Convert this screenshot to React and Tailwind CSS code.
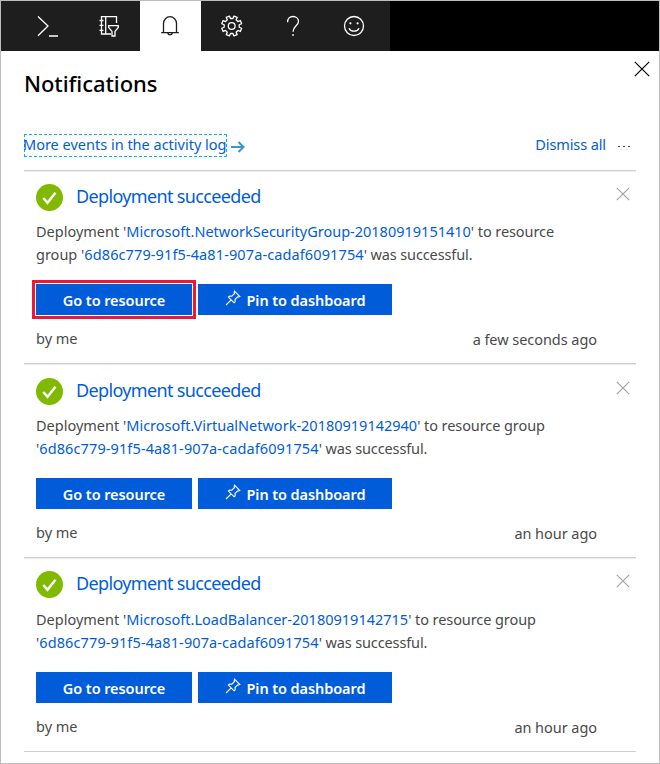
import React from "react";

const ITEMS = [
  {
    name: "Microsoft.NetworkSecurityGroup-20180919151410",
    tail: "' to resource",
    lead: "group '",
    time: "a few seconds ago",
    box: "h-[193px]",
    top: "pt-[12px]",
    textTop: "mt-[9px]",
    highlighted: true,
  },
  {
    name: "Microsoft.VirtualNetwork-20180919142940",
    tail: "' to resource group",
    lead: "'",
    time: "an hour ago",
    box: "h-[194px]",
    top: "pt-[13px]",
    textTop: "mt-[9px]",
  },
  {
    name: "Microsoft.LoadBalancer-20180919142715",
    tail: "' to resource group",
    lead: "'",
    time: "an hour ago",
    box: "h-[194px]",
    top: "pt-[12px]",
    textTop: "mt-[10px]",
  },
];

const GROUP = "6d86c779-91f5-4a81-907a-cadaf6091754";

function Icon({ children, size = 24, className = "" }) {
  return (
    <svg
      width={size}
      height={size}
      viewBox={`0 0 ${size} ${size}`}
      fill="none"
      stroke="currentColor"
      strokeWidth="1.3"
      className={`block shrink-0 ${className}`}
    >
      {children}
    </svg>
  );
}

function gearPath(cx, cy, outer, inner, teeth) {
  const step = (Math.PI * 2) / teeth;
  const at = (r, a) => `${(cx + r * Math.cos(a)).toFixed(2)} ${(cy + r * Math.sin(a)).toFixed(2)}`;
  let d = "";
  for (let i = 0; i < teeth; i++) {
    const a = (i + 0.5) * step - Math.PI / 2;
    d += `${i ? "L" : "M"}${at(inner, a - step * 0.29)}L${at(outer, a - step * 0.22)}L${at(outer, a + step * 0.22)}L${at(inner, a + step * 0.29)}`;
  }
  return d + "Z";
}

function TopBar() {
  return (
    <div className="flex h-[50px] bg-black text-white">
      <div className="flex h-full w-[389px] bg-[#1e1e1e]">
        <div className="flex w-[78px] items-center justify-end pr-[18px]">
          <Icon className="mr-[1px]">
            <path d="M2 2.5 12 12 2 21.8M13 22h9" />
          </Icon>
        </div>
        <div className="flex w-[61px] items-center justify-center">
          <Icon className="mr-[1px]">
            <path d="M19.500 9V2.700H4.500v17.300h9.500M8.700 2.700v17.300M2.500 6.500h4M2.500 11.400h4M2.500 16.300h4" />
            <path d="M11.700 11.700h9.600v1.700l-3.300 4v4.600h-3v-4.600l-3.300-4z" />
          </Icon>
        </div>
        <div className="flex w-[61px] items-center justify-center bg-white text-[#1e1e1e]">
          <Icon className="mr-[1px]">
            <path d="M5.500 18.700V9.500a6.500 6.800 0 0 1 13 0v9.200M3.200 18.700h17.600M9.800 19a2.300 2.300 0 0 0 4.500 0" />
          </Icon>
        </div>
        <div className="flex w-[61px] items-center justify-center">
          <Icon>
            <path d={gearPath(11.7, 12, 10.2, 7.6, 8)} strokeLinejoin="round" />
            <circle cx="11.700" cy="12" r="3.400" />
          </Icon>
        </div>
        <div className="flex w-[61px] items-center justify-center">
          <Icon>
            <path d="M6.600 8.200C6.600 4.300 8.800 2.500 12 2.500s5.500 2 5.500 5c0 4-5.500 4.800-5.500 10.200M12 20v2" />
          </Icon>
        </div>
        <div className="flex w-[61px] items-center justify-center">
          <Icon>
            <circle cx="12" cy="12" r="9.500" />
            <path d="M7 14.200c1.700 4 8.300 4 10 0" />
            <circle cx="8.400" cy="9.300" r="1.100" fill="currentColor" stroke="none" />
            <circle cx="15.600" cy="9.300" r="1.100" fill="currentColor" stroke="none" />
          </Icon>
        </div>
      </div>
    </div>
  );
}

function Notification({ item }) {
  return (
    <section className={`border-t border-[#cfcfcf] pl-3 shadow-[inset_0_1px_0_#ececec] ${item.box}`}>
      <div className={`flex items-start ${item.top}`}>
        <svg width="27" height="27" viewBox="0 0 27 27" className="mt-px block shrink-0">
          <circle cx="13.500" cy="13.500" r="13.500" fill="#7fba00" />
          <path d="m7.300 14 4.200 4.800 8-10" fill="none" stroke="#fff" strokeWidth="2.500" />
        </svg>
        <h2 className="ml-[13px] text-[18px] leading-[26px] tracking-[-0.65px] whitespace-nowrap text-[#015cda]">
          Deployment succeeded
        </h2>
        <Icon size={14} className="mt-[4px] mr-[6px] ml-auto text-[#a0a0a0]">
          <path d="m.8.8 12.400 12.400M13.200.8.8 13.200" strokeWidth="1.100" />
        </Icon>
      </div>
      <p className={`text-[14.5px] leading-[23px] whitespace-nowrap text-[#4a4a4a] ${item.textTop} -mb-px`}>
        Deployment '<span className="text-[#015cda]">{item.name}</span>
        <span className="tracking-[-0.08px]">{item.tail}</span>
        <br />
        {item.lead}
        <span className="tracking-[0.11px] text-[#015cda]">{GROUP}</span>
        <span className="tracking-[-0.12px]">' was successful.</span>
      </p>
      <div className="mt-[19px] flex gap-[6px] text-[14.5px] font-semibold tracking-[-0.08px] text-white">
        <button
          className={`h-[31px] w-[156px] bg-[#015cda] pt-[2px] ${
            item.highlighted ? "outline-3 outline-offset-1 outline-[#ee1739]" : ""
          }`}
        >
          Go to resource
        </button>
        <button className="flex h-[31px] w-[194px] items-center justify-center bg-[#015cda] pt-[2px]">
          <Icon size={16} className="mr-[6px] mb-[5px]">
            <path
              d="m9.500 1.200 5.300 5.300-1.300.5-.8-.2-2.700 2.700.2 2.200-1.100 1.100-5.700-5.700L4.600 6l2.200.2 2.700-2.700-.3-1zM6.200 9.900 1 15"
              strokeWidth="1.1"
            />
          </Icon>
          Pin to dashboard
        </button>
      </div>
      <div className="mt-[12px] flex justify-between pr-[39px] text-[14.5px] leading-[22px] text-[#4a4a4a]">
        <span>by me</span>
        <span className="pt-px tracking-[-0.05px]">{item.time}</span>
      </div>
    </section>
  );
}

export default function App() {
  return (
    <div className="h-[764px] w-[660px] overflow-hidden border border-[#bdbdbd] bg-white font-['Noto_Sans','Open_Sans',sans-serif]">
      <TopBar />
      <div className="flex h-[68px] items-start pl-[23px]">
        <h1 className="mt-[16px] text-[22px] leading-[32px] font-medium tracking-[-0.08px] text-black">Notifications</h1>
        <Icon size={16} className="mt-[10px] mr-[9px] ml-auto text-black">
          <path d="m.8.8 14.400 14.400M15.200.8.8 15.200" strokeWidth="1.200" />
        </Icon>
      </div>
      <div className="flex h-[51px] items-start px-[23px] pt-[15px] text-[14.5px] leading-[21px] text-[#015cda]">
        <a className="h-[23px] w-[203px] border border-dashed border-[#00b7ee] leading-[19px] whitespace-nowrap">
          <span className="-ml-[2px]">More events in the activity log</span>
        </a>
        <svg width="14" height="12" viewBox="0 0 14 12" className="mt-[7px] ml-[4px] block" fill="none" stroke="#3999c6" strokeWidth="2">
          <path d="M0 6h12M7.500 1l5 5-5 5" />
        </svg>
        <a className="ml-auto tracking-[-0.1px]">Dismiss all</a>
        <span className="mt-[12px] mr-[6px] ml-[12px] flex gap-[3px]">
          <i className="h-px w-[2px] bg-[#444]" />
          <i className="h-px w-[2px] bg-[#444]" />
          <i className="h-px w-[2px] bg-[#444]" />
        </span>
      </div>
      <div className="mx-[23px] border-b border-[#cfcfcf]">
        {ITEMS.map((item) => (
          <Notification key={item.name} item={item} />
        ))}
      </div>
    </div>
  );
}
